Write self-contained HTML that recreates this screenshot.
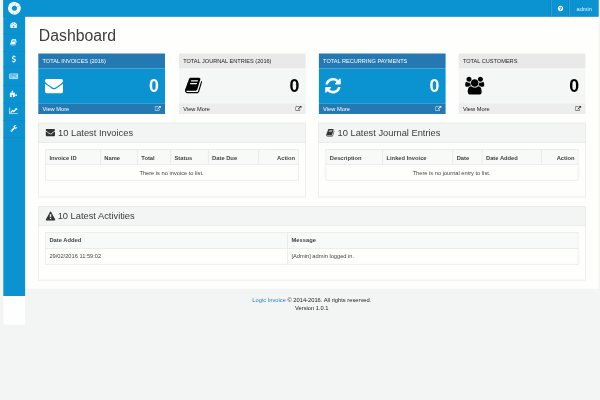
<!DOCTYPE html><html><head><meta charset="utf-8"><title>Dashboard</title><style>
*{box-sizing:border-box;margin:0;padding:0}
html,body{width:600px;height:400px;overflow:hidden}
body{background:#f3f4f4;font-family:"Liberation Sans",Arial,sans-serif;position:relative}
#g{position:absolute;left:0;top:0;width:600px;height:400px;display:block}
.t{position:absolute;white-space:nowrap;line-height:1}
.t span{flex:none}
#foot{position:absolute;left:25px;top:296.1px;width:573.6px;text-align:center;font-size:5.75px;line-height:8.3px;color:#222}
#foot a{color:#2f83c3;text-decoration:none}
#tx{position:absolute;left:0;top:0;width:600px;height:400px;will-change:transform}
</style></head><body>
<svg id="g" viewBox="0 0 600 400" width="600" height="400"><defs><path id="i-dashboard" d="M384 384C384 313 327 256 256 256C185 256 128 313 128 384C128 455 185 512 256 512C327 512 384 455 384 384ZM576 832C576 761 519 704 448 704C377 704 320 761 320 832C320 903 377 960 448 960C519 960 576 903 576 832ZM1004 351C1069 306 1103 224 1082 143C1055 41 950 -21 847 6C745 33 683 138 710 241C732 322 801 377 880 383L981 765C990 799 1025 820 1059 811C1093 802 1113 767 1105 733ZM1664 384C1664 313 1607 256 1536 256C1465 256 1408 313 1408 384C1408 455 1465 512 1536 512C1607 512 1664 455 1664 384ZM1024 1024C1024 953 967 896 896 896C825 896 768 953 768 1024C768 1095 825 1152 896 1152C967 1152 1024 1095 1024 1024ZM1472 832C1472 761 1415 704 1344 704C1273 704 1216 761 1216 832C1216 903 1273 960 1344 960C1415 960 1472 903 1472 832ZM1792 384C1792 878 1390 1280 896 1280C402 1280 0 878 0 384C0 212 49 45 141 -99C153 -117 173 -128 195 -128H1597C1619 -128 1639 -117 1651 -99C1743 46 1792 212 1792 384Z"/><path id="i-book" d="M1639 1058C1624 1078 1603 1092 1580 1101C1581 1083 1581 1063 1575 1044L1275 57C1264 21 1221 0 1184 0H261C206 0 137 12 117 70C109 92 110 101 118 113C127 125 143 128 156 128H1025C1152 128 1178 162 1225 316L1499 1222C1513 1269 1507 1316 1481 1352C1456 1387 1414 1408 1367 1408H606C589 1408 572 1403 555 1399L556 1402C429 1438 421 1301 379 1239C363 1216 339 1196 335 1177C332 1159 342 1142 340 1125C334 1072 294 977 270 944C255 924 233 914 226 891C220 875 230 852 228 831C223 784 188 695 161 649C151 631 132 617 127 598C122 581 132 559 127 540C116 488 82 407 52 357C36 330 15 313 11 289C9 277 18 264 17 248C16 224 12 204 10 184C-4 146 -4 102 12 57C49 -47 158 -128 260 -128H1183C1269 -128 1357 -62 1382 23L1657 929C1671 975 1664 1022 1639 1058ZM575 1056 596 1120C602 1138 621 1152 638 1152H1246C1264 1152 1274 1138 1268 1120L1247 1056C1241 1038 1222 1024 1205 1024H597C579 1024 569 1038 575 1056ZM492 800 513 864C519 882 538 896 555 896H1163C1181 896 1191 882 1185 864L1164 800C1158 782 1139 768 1122 768H514C496 768 486 782 492 800Z"/><path id="i-usd" d="M978 351C978 592 770 673 586 744C444 799 322 846 322 952C322 1043 410 1106 537 1106C687 1106 808 999 809 998C817 992 826 989 836 991C846 992 854 998 859 1007L940 1153C947 1165 945 1180 935 1191C931 1195 823 1305 620 1328V1504C620 1522 606 1536 588 1536H453C436 1536 421 1522 421 1504V1324C212 1284 68 1132 68 948C68 697 292 607 472 536C607 482 725 435 725 339C725 226 619 174 521 174C344 174 204 308 202 309C196 316 187 319 178 318C169 317 160 313 155 306L52 171C43 159 44 142 54 130C59 124 187 -16 421 -49V-224C421 -242 436 -256 453 -256H588C606 -256 620 -242 620 -224V-49C832 -14 978 147 978 351Z"/><path id="i-keyboard" d="M384 368C384 377 377 384 368 384H272C263 384 256 377 256 368V272C256 263 263 256 272 256H368C377 256 384 263 384 272ZM512 624C512 633 505 640 496 640H272C263 640 256 633 256 624V528C256 519 263 512 272 512H496C505 512 512 519 512 528ZM384 880C384 889 377 896 368 896H272C263 896 256 889 256 880V784C256 775 263 768 272 768H368C377 768 384 775 384 784ZM1408 368C1408 377 1401 384 1392 384H528C519 384 512 377 512 368V272C512 263 519 256 528 256H1392C1401 256 1408 263 1408 272ZM768 624C768 633 761 640 752 640H656C647 640 640 633 640 624V528C640 519 647 512 656 512H752C761 512 768 519 768 528ZM640 880C640 889 633 896 624 896H528C519 896 512 889 512 880V784C512 775 519 768 528 768H624C633 768 640 775 640 784ZM1024 624C1024 633 1017 640 1008 640H912C903 640 896 633 896 624V528C896 519 903 512 912 512H1008C1017 512 1024 519 1024 528ZM896 880C896 889 889 896 880 896H784C775 896 768 889 768 880V784C768 775 775 768 784 768H880C889 768 896 775 896 784ZM1280 624C1280 633 1273 640 1264 640H1168C1159 640 1152 633 1152 624V528C1152 519 1159 512 1168 512H1264C1273 512 1280 519 1280 528ZM1664 368C1664 377 1657 384 1648 384H1552C1543 384 1536 377 1536 368V272C1536 263 1543 256 1552 256H1648C1657 256 1664 263 1664 272ZM1152 880C1152 889 1145 896 1136 896H1040C1031 896 1024 889 1024 880V784C1024 775 1031 768 1040 768H1136C1145 768 1152 775 1152 784ZM1408 880C1408 889 1401 896 1392 896H1296C1287 896 1280 889 1280 880V784C1280 775 1287 768 1296 768H1392C1401 768 1408 775 1408 784ZM1664 880C1664 889 1657 896 1648 896H1552C1543 896 1536 889 1536 880V640H1424C1415 640 1408 633 1408 624V528C1408 519 1415 512 1424 512H1648C1657 512 1664 519 1664 528ZM1792 128H128V1024H1792ZM1920 1024C1920 1095 1863 1152 1792 1152H128C57 1152 0 1095 0 1024V128C0 57 57 0 128 0H1792C1863 0 1920 57 1920 128Z"/><path id="i-puzzle" d="M1664 438C1664 543 1606 640 1491 640C1364 640 1309 543 1240 543C1205 543 1174 565 1151 589C1122 620 1116 664 1116 706C1116 788 1127 870 1140 951C1142 961 1149 1020 1152 1024V1026C1038 1020 924 994 809 994C738 994 664 1022 664 1104C664 1214 775 1246 775 1368C775 1477 689 1536 587 1536C481 1536 384 1478 384 1363C384 1236 481 1181 481 1112C481 1077 459 1046 435 1023C404 994 360 988 318 988C236 988 154 999 73 1012C63 1014 4 1021 0 1024V0C0 -1 3 -1 5 -2L18 -4C36 -7 55 -9 73 -12C154 -25 236 -36 318 -36C360 -36 404 -30 435 -1C459 22 481 53 481 88C481 157 384 212 384 339C384 454 481 512 586 512C689 512 775 453 775 344C775 222 664 190 664 80C664 -2 738 -30 809 -30C913 -30 1017 -10 1120 0C1131 1 1142 1 1153 1V6C1154 83 1122 158 1122 236C1122 310 1152 360 1232 360C1342 360 1374 249 1496 249C1605 249 1664 335 1664 438Z"/><path id="i-linechart" d="M2048 0H128V1408H0V-128H2048ZM1920 1248C1920 1266 1906 1280 1888 1280H1453C1425 1280 1410 1246 1431 1225L1552 1104L1088 640L855 873C842 886 822 886 809 873L224 288L416 96L832 512L1065 279C1078 266 1098 266 1111 279L1744 912L1865 791C1886 770 1920 785 1920 813Z"/><path id="i-wrench" d="M384 64C384 29 355 0 320 0C285 0 256 29 256 64C256 99 285 128 320 128C355 128 384 99 384 64ZM1028 484C897 536 792 641 740 772L59 91C35 67 21 34 21 0C21 -34 35 -67 59 -90L165 -198C189 -221 222 -235 256 -235C290 -235 323 -221 346 -198L1028 484ZM1662 919C1662 939 1650 954 1630 954C1610 954 1378 808 1345 789L1152 896V1120L1445 1289C1454 1295 1461 1306 1461 1317C1461 1329 1455 1338 1445 1345C1384 1386 1289 1408 1216 1408C969 1408 768 1207 768 960C768 713 969 512 1216 512C1405 512 1576 635 1639 813C1650 845 1662 886 1662 919Z"/><path id="i-question" d="M896 160C896 142 882 128 864 128H672C654 128 640 142 640 160V352C640 370 654 384 672 384H864C882 384 896 370 896 352V160ZM1152 832C1152 680 1048 622 972 579C925 552 896 503 896 480C896 462 882 448 864 448H672C654 448 640 462 640 480V516C640 613 737 696 808 728C869 756 896 782 896 834C896 878 837 919 773 919C737 919 704 907 687 895C668 881 648 863 601 803C595 795 585 791 576 791C569 791 562 793 557 797L425 897C412 907 408 925 417 939C503 1082 625 1152 788 1152C960 1152 1152 1015 1152 832ZM1536 640C1536 1064 1192 1408 768 1408C344 1408 0 1064 0 640C0 216 344 -128 768 -128C1192 -128 1536 216 1536 640Z"/><path id="i-envelope" d="M1792 826C1762 793 1728 764 1692 739C1525 626 1357 512 1194 394C1110 332 1006 256 897 256H896H895C786 256 682 332 598 394C435 513 267 626 101 739C64 764 30 793 0 826V32C0 -56 72 -128 160 -128H1632C1720 -128 1792 -56 1792 32ZM1792 1120C1792 1208 1719 1280 1632 1280H160C53 1280 0 1196 0 1098C0 1007 101 894 172 846C327 738 484 630 639 521C704 476 814 384 895 384H896H897C978 384 1088 476 1153 521C1308 630 1465 738 1621 846C1709 907 1792 1008 1792 1120Z"/><path id="i-external" d="M1408 608C1408 626 1394 640 1376 640H1312C1294 640 1280 626 1280 608V288C1280 200 1208 128 1120 128H288C200 128 128 200 128 288V1120C128 1208 200 1280 288 1280H992C1010 1280 1024 1294 1024 1312V1376C1024 1394 1010 1408 992 1408H288C129 1408 0 1279 0 1120V288C0 129 129 0 288 0H1120C1279 0 1408 129 1408 288ZM1792 1472C1792 1507 1763 1536 1728 1536H1216C1181 1536 1152 1507 1152 1472C1152 1455 1159 1439 1171 1427L1347 1251L695 599C689 593 685 584 685 576C685 568 689 559 695 553L809 439C815 433 824 429 832 429C840 429 849 433 855 439L1507 1091L1683 915C1695 903 1711 896 1728 896C1763 896 1792 925 1792 960Z"/><path id="i-refresh" d="M1511 480C1511 497 1497 512 1479 512H1287C1272 512 1262 503 1257 489C1240 449 1228 411 1204 372C1111 220 946 128 768 128C639 128 514 178 420 266L557 403C569 415 576 431 576 448C576 483 547 512 512 512H64C29 512 0 483 0 448V0C0 -35 29 -64 64 -64C81 -64 97 -57 109 -45L238 84C380 -51 569 -128 764 -128C1133 -128 1425 119 1510 473C1511 475 1511 478 1511 480ZM1536 1280C1536 1315 1507 1344 1472 1344C1455 1344 1439 1337 1427 1325L1297 1196C1155 1330 964 1408 768 1408C399 1408 104 1162 18 807C18 805 18 802 18 800C18 783 32 768 50 768H249C264 768 274 777 279 791C296 831 308 869 332 908C425 1060 590 1152 768 1152C897 1152 1022 1103 1117 1015L979 877C967 865 960 849 960 832C960 797 989 768 1024 768H1472C1507 768 1536 797 1536 832Z"/><path id="i-users" d="M593 640C541 715 512 805 512 896C512 918 514 940 517 962C474 947 430 939 384 939C249 939 145 1024 124 1024C-3 1024 0 752 0 671C0 560 94 512 194 512H328C395 592 489 637 593 640ZM1664 3C1664 229 1611 576 1318 576C1284 576 1160 437 960 437C760 437 636 576 602 576C309 576 256 229 256 3C256 -159 363 -256 523 -256H1397C1557 -256 1664 -159 1664 3ZM640 1280C640 1421 525 1536 384 1536C243 1536 128 1421 128 1280C128 1139 243 1024 384 1024C525 1024 640 1139 640 1280ZM1344 896C1344 1108 1172 1280 960 1280C748 1280 576 1108 576 896C576 684 748 512 960 512C1172 512 1344 684 1344 896ZM1920 671C1920 752 1923 1024 1796 1024C1775 1024 1671 939 1536 939C1490 939 1446 947 1403 962C1406 940 1408 918 1408 896C1408 805 1379 715 1327 640C1431 637 1525 592 1592 512H1726C1826 512 1920 560 1920 671ZM1792 1280C1792 1421 1677 1536 1536 1536C1395 1536 1280 1421 1280 1280C1280 1139 1395 1024 1536 1024C1677 1024 1792 1139 1792 1280Z"/><path id="i-warning" d="M1024 161C1024 143 1010 128 992 128H800C782 128 768 143 768 161V351C768 369 782 384 800 384H992C1010 384 1024 369 1024 351V161ZM1022 535C1021 522 1006 512 988 512H803C784 512 769 522 769 535L752 992C752 998 755 1008 762 1013C768 1018 777 1024 786 1024H1006C1015 1024 1024 1018 1030 1013C1037 1008 1040 1000 1040 994ZM1008 1469C986 1510 943 1536 896 1536C849 1536 806 1510 784 1469L16 61C-6 22 -5 -26 18 -65C41 -104 83 -128 128 -128H1664C1709 -128 1751 -104 1774 -65C1797 -26 1798 22 1776 61Z"/></defs>
<rect x="25.10" y="16.70" width="573.50" height="272.05" fill="#fefefd"/>
<rect x="3.30" y="0.00" width="595.40" height="16.80" fill="#0a92d1"/>
<rect x="3.30" y="0.00" width="21.80" height="296.00" fill="#0a92d1"/>
<rect x="3.30" y="296.00" width="21.80" height="28.50" fill="#fdfefd"/>
<circle cx="14.4" cy="8.25" r="4.52" fill="none" stroke="#f7fbfd" stroke-width="3.85" stroke-dasharray="3.39 0.16" transform="rotate(12 14.4 8.25)"/>
<rect x="3.30" y="16.50" width="21.80" height="0.60" fill="#1188c8"/>
<rect x="3.30" y="33.50" width="21.80" height="0.60" fill="#1188c8"/>
<rect x="3.30" y="51.20" width="21.80" height="0.60" fill="#1188c8"/>
<rect x="3.30" y="66.70" width="21.80" height="0.60" fill="#1188c8"/>
<rect x="3.30" y="85.00" width="21.80" height="0.60" fill="#1188c8"/>
<rect x="3.30" y="102.90" width="21.80" height="0.60" fill="#1188c8"/>
<rect x="3.30" y="120.20" width="21.80" height="0.60" fill="#1188c8"/>
<rect x="3.30" y="137.10" width="21.80" height="0.60" fill="#1188c8"/>
<use href="#i-dashboard" fill="#fff" transform="translate(10.10 27.43) scale(0.00396 -0.00396)"/>
<use href="#i-book" fill="#fff" transform="translate(10.25 44.70) scale(0.00391 -0.00391)"/>
<use href="#i-usd" fill="#fff" transform="translate(11.65 61.75) scale(0.00430 -0.00430)"/>
<use stroke="#fff" stroke-width="40" href="#i-keyboard" fill="#fff" transform="translate(9.50 78.85) scale(0.00443 -0.00443)"/>
<use href="#i-puzzle" fill="#fff" transform="translate(9.90 97.05) scale(0.00433 -0.00433)"/>
<use stroke="#fff" stroke-width="40" href="#i-linechart" fill="#fff" transform="translate(9.35 113.34) scale(0.00405 -0.00405)"/>
<use href="#i-wrench" fill="#fff" transform="translate(10.41 130.89) scale(0.00408 -0.00408)"/>
<rect x="551.02" y="0.00" width="0.55" height="16.80" fill="#56aedd"/>
<rect x="569.12" y="0.00" width="0.55" height="16.80" fill="#56aedd"/>
<rect x="550.55" y="0.00" width="0.50" height="16.80" fill="#0b7fbc"/>
<rect x="568.65" y="0.00" width="0.50" height="16.80" fill="#0b7fbc"/>
<use href="#i-question" fill="#fff" transform="translate(557.80 10.75) scale(0.00352 -0.00352)"/>
<rect x="38.30" y="53.50" width="126.70" height="15.10" fill="#2479b2"/>
<rect x="38.30" y="68.60" width="126.70" height="35.20" fill="#0a92d1"/>
<rect x="38.30" y="103.80" width="126.70" height="10.20" fill="#2479b2"/>
<use href="#i-envelope" fill="#fff" transform="translate(45.00 91.94) scale(0.01004 -0.01004)"/>
<use href="#i-external" fill="#fff" transform="translate(154.90 110.89) scale(0.00324 -0.00324)"/>
<rect x="179.00" y="53.50" width="126.70" height="15.10" fill="#e9e9e9"/>
<rect x="179.00" y="68.60" width="126.70" height="34.80" fill="#f5f6f6"/>
<rect x="179.00" y="103.40" width="126.70" height="10.60" fill="#ededed"/>
<use href="#i-book" fill="#000" transform="translate(185.00 92.04) scale(0.01021 -0.01021)"/>
<use href="#i-external" fill="#2a2a2a" transform="translate(295.60 110.89) scale(0.00324 -0.00324)"/>
<rect x="318.90" y="53.50" width="126.70" height="15.10" fill="#2479b2"/>
<rect x="318.90" y="68.60" width="126.70" height="35.20" fill="#0a92d1"/>
<rect x="318.90" y="103.80" width="126.70" height="10.20" fill="#2479b2"/>
<use href="#i-refresh" fill="#fff" transform="translate(325.25 92.16) scale(0.01009 -0.01009)"/>
<use href="#i-external" fill="#fff" transform="translate(435.50 110.89) scale(0.00324 -0.00324)"/>
<rect x="458.70" y="53.50" width="126.70" height="15.10" fill="#e9e9e9"/>
<rect x="458.70" y="68.60" width="126.70" height="34.80" fill="#f5f6f6"/>
<rect x="458.70" y="103.40" width="126.70" height="10.60" fill="#ededed"/>
<use href="#i-users" fill="#000" transform="translate(465.20 91.93) scale(0.00990 -0.00990)"/>
<use href="#i-external" fill="#2a2a2a" transform="translate(575.30 110.89) scale(0.00324 -0.00324)"/>
<rect x="38.30" y="123.00" width="267.10" height="74.00" fill="#fefefd"/>
<rect x="38.30" y="123.00" width="267.10" height="19.70" fill="#f3f4f4"/>
<rect x="38.02" y="122.72" width="267.65" height="0.55" fill="#e0e1e1"/>
<rect x="38.02" y="196.72" width="267.65" height="0.55" fill="#e0e1e1"/>
<rect x="38.02" y="123.00" width="0.55" height="74.00" fill="#e0e1e1"/>
<rect x="305.12" y="123.00" width="0.55" height="74.00" fill="#e0e1e1"/>
<rect x="38.30" y="142.42" width="267.10" height="0.55" fill="#e0e1e1"/>
<use href="#i-envelope" fill="#333" transform="translate(45.80 135.66) scale(0.00513 -0.00513)"/>
<rect x="45.50" y="149.60" width="253.00" height="14.70" fill="#f8f9f9"/>
<rect x="45.23" y="149.32" width="253.55" height="0.55" fill="#e0e1e1"/>
<rect x="45.23" y="179.92" width="253.55" height="0.55" fill="#e0e1e1"/>
<rect x="45.23" y="149.60" width="0.55" height="30.60" fill="#e0e1e1"/>
<rect x="298.23" y="149.60" width="0.55" height="30.60" fill="#e0e1e1"/>
<rect x="45.50" y="164.03" width="253.00" height="0.55" fill="#e0e1e1"/>
<rect x="100.12" y="149.60" width="0.55" height="14.70" fill="#e0e1e1"/>
<rect x="137.12" y="149.60" width="0.55" height="14.70" fill="#e0e1e1"/>
<rect x="170.32" y="149.60" width="0.55" height="14.70" fill="#e0e1e1"/>
<rect x="207.92" y="149.60" width="0.55" height="14.70" fill="#e0e1e1"/>
<rect x="258.53" y="149.60" width="0.55" height="14.70" fill="#e0e1e1"/>
<rect x="318.70" y="123.00" width="266.80" height="74.00" fill="#fefefd"/>
<rect x="318.70" y="123.00" width="266.80" height="19.70" fill="#f3f4f4"/>
<rect x="318.43" y="122.72" width="267.35" height="0.55" fill="#e0e1e1"/>
<rect x="318.43" y="196.72" width="267.35" height="0.55" fill="#e0e1e1"/>
<rect x="318.43" y="123.00" width="0.55" height="74.00" fill="#e0e1e1"/>
<rect x="585.23" y="123.00" width="0.55" height="74.00" fill="#e0e1e1"/>
<rect x="318.70" y="142.42" width="266.80" height="0.55" fill="#e0e1e1"/>
<use href="#i-book" fill="#333" transform="translate(326.20 135.85) scale(0.00493 -0.00493)"/>
<rect x="325.90" y="149.60" width="252.20" height="14.70" fill="#f8f9f9"/>
<rect x="325.62" y="149.32" width="252.75" height="0.55" fill="#e0e1e1"/>
<rect x="325.62" y="179.92" width="252.75" height="0.55" fill="#e0e1e1"/>
<rect x="325.62" y="149.60" width="0.55" height="30.60" fill="#e0e1e1"/>
<rect x="577.83" y="149.60" width="0.55" height="30.60" fill="#e0e1e1"/>
<rect x="325.90" y="164.03" width="252.20" height="0.55" fill="#e0e1e1"/>
<rect x="382.33" y="149.60" width="0.55" height="14.70" fill="#e0e1e1"/>
<rect x="452.53" y="149.60" width="0.55" height="14.70" fill="#e0e1e1"/>
<rect x="481.83" y="149.60" width="0.55" height="14.70" fill="#e0e1e1"/>
<rect x="541.02" y="149.60" width="0.55" height="14.70" fill="#e0e1e1"/>
<rect x="38.30" y="206.30" width="547.20" height="73.80" fill="#fefefd"/>
<rect x="38.30" y="206.30" width="547.20" height="19.10" fill="#f3f4f4"/>
<rect x="38.02" y="206.03" width="547.75" height="0.55" fill="#e0e1e1"/>
<rect x="38.02" y="279.83" width="547.75" height="0.55" fill="#e0e1e1"/>
<rect x="38.02" y="206.30" width="0.55" height="73.80" fill="#e0e1e1"/>
<rect x="585.23" y="206.30" width="0.55" height="73.80" fill="#e0e1e1"/>
<rect x="38.30" y="225.12" width="547.20" height="0.55" fill="#e0e1e1"/>
<use href="#i-warning" fill="#333" transform="translate(45.80 219.73) scale(0.00530 -0.00530)"/>
<rect x="45.50" y="232.60" width="532.60" height="15.80" fill="#f8f9f9"/>
<rect x="45.23" y="232.32" width="533.15" height="0.55" fill="#e0e1e1"/>
<rect x="45.23" y="263.93" width="533.15" height="0.55" fill="#e0e1e1"/>
<rect x="45.23" y="232.60" width="0.55" height="31.60" fill="#e0e1e1"/>
<rect x="577.83" y="232.60" width="0.55" height="31.60" fill="#e0e1e1"/>
<rect x="45.50" y="248.12" width="532.60" height="0.55" fill="#e0e1e1"/>
<rect x="287.33" y="232.60" width="0.55" height="15.80" fill="#e0e1e1"/>
<rect x="287.33" y="248.40" width="0.55" height="15.80" fill="#e0e1e1"/>
</svg>
<div id="tx"><div class="t" style="top:7.10px;font-size:5.60px;color:#e8f4fb;left:576.60px;">admin</div>
<div class="t" style="top:28.10px;font-size:15.80px;color:#3d3d3d;left:38.80px;">Dashboard</div>
<div class="t" style="top:59.10px;font-size:5.60px;color:#fff;left:42.50px;">TOTAL INVOICES (2016)</div>
<div class="t" style="top:107.10px;font-size:5.70px;color:#fff;left:42.50px;">View More</div>
<div class="t" style="top:78.10px;font-size:17.80px;color:#fff;font-weight:bold;right:441.20px;">0</div>
<div class="t" style="top:59.10px;font-size:5.60px;color:#222;left:183.20px;">TOTAL JOURNAL ENTRIES (2016)</div>
<div class="t" style="top:107.10px;font-size:5.70px;color:#222;left:183.20px;">View More</div>
<div class="t" style="top:78.10px;font-size:17.80px;color:#000;font-weight:bold;right:300.50px;">0</div>
<div class="t" style="top:59.10px;font-size:5.60px;color:#fff;left:323.10px;">TOTAL RECURRING PAYMENTS</div>
<div class="t" style="top:107.10px;font-size:5.70px;color:#fff;left:323.10px;">View More</div>
<div class="t" style="top:78.10px;font-size:17.80px;color:#fff;font-weight:bold;right:160.60px;">0</div>
<div class="t" style="top:59.10px;font-size:5.60px;color:#222;left:462.90px;">TOTAL CUSTOMERS</div>
<div class="t" style="top:107.10px;font-size:5.70px;color:#222;left:462.90px;">View More</div>
<div class="t" style="top:78.10px;font-size:17.80px;color:#000;font-weight:bold;right:20.80px;">0</div>
<div class="t" style="top:129.10px;font-size:9.30px;color:#3c3c3c;left:58.10px;">10 Latest Invoices</div>
<div class="t" style="top:156.10px;font-size:5.78px;color:#444;font-weight:bold;left:49.40px;">Invoice ID</div>
<div class="t" style="top:156.10px;font-size:5.78px;color:#444;font-weight:bold;left:104.30px;">Name</div>
<div class="t" style="top:156.10px;font-size:5.78px;color:#444;font-weight:bold;left:141.30px;">Total</div>
<div class="t" style="top:156.10px;font-size:5.78px;color:#444;font-weight:bold;left:174.50px;">Status</div>
<div class="t" style="top:156.10px;font-size:5.78px;color:#444;font-weight:bold;left:212.10px;">Date Due</div>
<div class="t" style="top:156.10px;font-size:5.78px;color:#444;font-weight:bold;right:305.00px;">Action</div>
<div class="t" style="top:171.10px;font-size:5.70px;color:#444;left:171.50px;width:0;display:flex;justify-content:center;"><span>There is no invoice to list.</span></div>
<div class="t" style="top:129.10px;font-size:9.30px;color:#3c3c3c;left:337.60px;">10 Latest Journal Entries</div>
<div class="t" style="top:156.10px;font-size:5.78px;color:#444;font-weight:bold;left:329.80px;">Description</div>
<div class="t" style="top:156.10px;font-size:5.78px;color:#444;font-weight:bold;left:386.50px;">Linked Invoice</div>
<div class="t" style="top:156.10px;font-size:5.78px;color:#444;font-weight:bold;left:456.70px;">Date</div>
<div class="t" style="top:156.10px;font-size:5.78px;color:#444;font-weight:bold;left:486.00px;">Date Added</div>
<div class="t" style="top:156.10px;font-size:5.78px;color:#444;font-weight:bold;right:25.40px;">Action</div>
<div class="t" style="top:171.10px;font-size:5.70px;color:#444;left:451.50px;width:0;display:flex;justify-content:center;"><span>There is no journal entry to list.</span></div>
<div class="t" style="top:212.10px;font-size:9.30px;color:#3c3c3c;left:57.70px;">10 Latest Activities</div>
<div class="t" style="top:238.10px;font-size:5.78px;color:#444;font-weight:bold;left:49.40px;">Date Added</div>
<div class="t" style="top:238.10px;font-size:5.78px;color:#444;font-weight:bold;left:291.50px;">Message</div>
<div class="t" style="top:254.10px;font-size:5.70px;color:#444;left:49.40px;">29/02/2016 11:59:02</div>
<div class="t" style="top:254.10px;font-size:5.70px;color:#444;left:291.50px;">[Admin] admin logged in.</div>
<div id="foot"><a>Logic Invoice</a> &copy; 2014-2016. All rights reserved.<br>Version 1.0.1</div></div>
</body></html>
